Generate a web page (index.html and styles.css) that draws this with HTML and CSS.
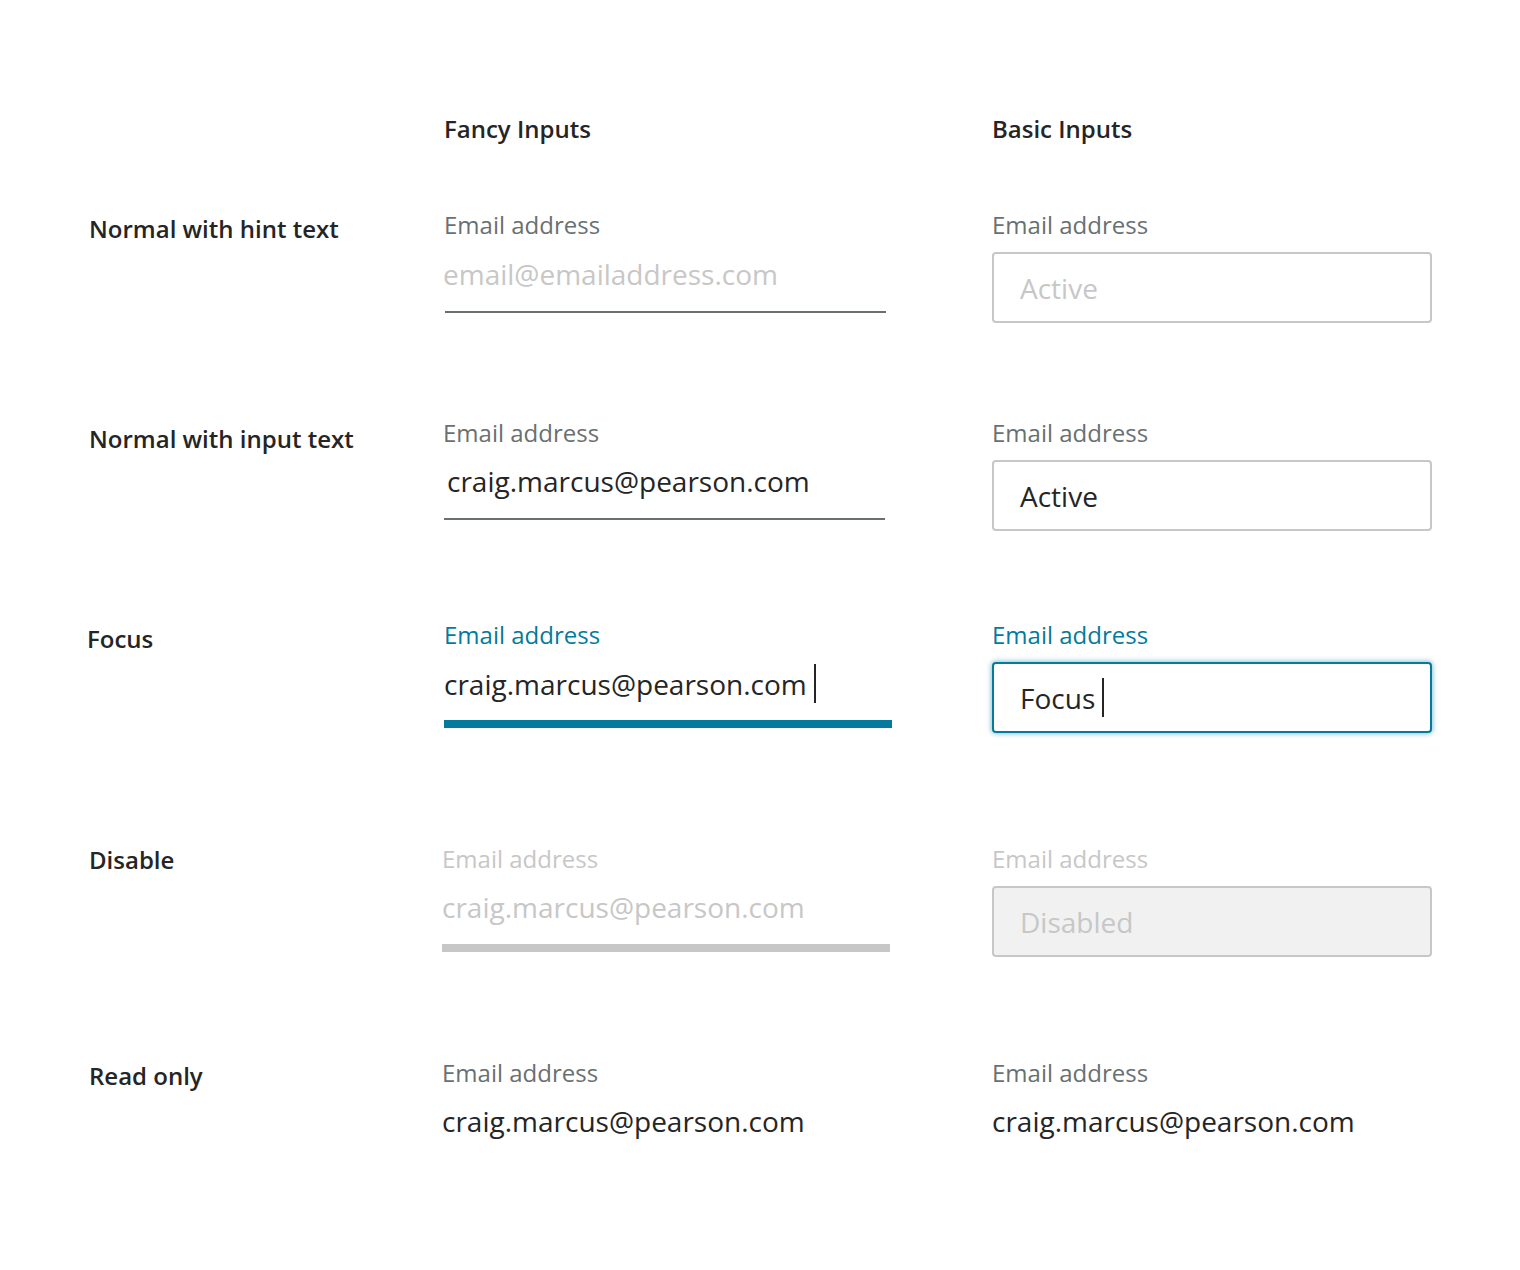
FILE: index.html
```html
<!DOCTYPE html>
<html lang="en">
<head>
<meta charset="utf-8">
<title>Inputs</title>
<link rel="stylesheet" href="styles.css">
</head>
<body>
<main class="sheet">
  <div class="row row-head">
    <div class="row-label"></div>
    <div class="col-title">Fancy Inputs</div>
    <div class="col-title">Basic Inputs</div>
  </div>

  <div class="row row-1">
    <div class="row-label">Normal with hint text</div>
    <div class="fancy">
      <div class="field-label">Email address</div>
      <div class="fancy-value hint wide-gap">email@emailaddress.com</div>
    </div>
    <div class="basic">
      <div class="field-label">Email address</div>
      <div class="box"><span class="hint">Active</span></div>
    </div>
  </div>

  <div class="row row-2">
    <div class="row-label">Normal with input text</div>
    <div class="fancy shift-1">
      <div class="field-label">Email address</div>
      <div class="fancy-value indent">craig.marcus@pearson.com</div>
    </div>
    <div class="basic">
      <div class="field-label">Email address</div>
      <div class="box">Active</div>
    </div>
  </div>

  <div class="row row-3">
    <div class="row-label shift-2">Focus</div>
    <div class="fancy">
      <div class="field-label focus">Email address</div>
      <div class="fancy-value focused">craig.marcus@pearson.com<span class="caret"></span></div>
    </div>
    <div class="basic">
      <div class="field-label focus">Email address</div>
      <div class="box box-focus">Focus<span class="caret"></span></div>
    </div>
  </div>

  <div class="row row-4">
    <div class="row-label">Disable</div>
    <div class="fancy shift-2">
      <div class="field-label disabled">Email address</div>
      <div class="fancy-value disabled-value">craig.marcus@pearson.com</div>
    </div>
    <div class="basic">
      <div class="field-label disabled">Email address</div>
      <div class="box box-disabled">Disabled</div>
    </div>
  </div>

  <div class="row row-5">
    <div class="row-label">Read only</div>
    <div class="fancy shift-2">
      <div class="field-label">Email address</div>
      <div class="read-value">craig.marcus@pearson.com</div>
    </div>
    <div class="basic">
      <div class="field-label">Email address</div>
      <div class="read-value">craig.marcus@pearson.com</div>
    </div>
  </div>
</main>
</body>
</html>
```

FILE: styles.css
```css
html, body {
  margin: 0;
  padding: 0;
  background: #ffffff;
}

body {
  font-family: "Open Sans", "Noto Sans", sans-serif;
  color: #252525;
}

.sheet {
  padding: 114px 0 0 89px;
}

.row {
  display: grid;
  grid-template-columns: 355px 548px 440px;
  align-items: start;
}

.row-1 { margin-top: 66px; }
.row-2 { margin-top: 95px; }
.row-3 { margin-top: 89px; }
.row-4 { margin-top: 111px; }
.row-5 { margin-top: 101px; }

.col-title {
  font-size: 24px;
  line-height: 30px;
  font-weight: 600;
  color: #252525;
}

.row-label {
  font-size: 24px;
  line-height: 30px;
  font-weight: 600;
  color: #252525;
  padding-top: 4px;
}

.row-2 .row-label { padding-top: 6px; }
.row-4 .row-label { padding-top: 1px; }
.row-5 .row-label { padding-top: 3px; }

.shift-1 { margin-left: -1px; }
.shift-2 { margin-left: -2px; }

.field-label {
  font-size: 24px;
  line-height: 30px;
  color: #6a7070;
}

.field-label.focus { color: #047a9c; }
.field-label.disabled { color: #c7c7c7; }

.fancy {
  width: 448px;
}

.fancy-value {
  width: 441px;
  margin-left: 1px;
  margin-top: 14px;
  padding-bottom: 18px;
  font-size: 28px;
  line-height: 38px;
  height: 38px;
  white-space: nowrap;
  border-bottom: 2px solid #6a7070;
  color: #252525;
}

.fancy-value.wide-gap {
  margin-top: 15px;
  margin-left: 1px;
  text-indent: -2px;
}

.fancy-value.indent {
  text-indent: 3px;
}

.hint { color: #c7c7c7; }

.fancy-value.focused {
  width: 448px;
  margin-left: 0;
  border-bottom: 8px solid #047a9c;
}

.fancy-value.disabled-value {
  width: 448px;
  margin-left: 0;
  color: #c7c7c7;
  border-bottom: 8px solid #c7c7c7;
}

.read-value {
  margin-top: 14px;
  font-size: 28px;
  line-height: 38px;
  white-space: nowrap;
  color: #252525;
}

.caret {
  display: inline-block;
  width: 2px;
  height: 39px;
  margin-left: 7px;
  background: #252525;
  vertical-align: -8px;
}

.basic {
  width: 440px;
}

.box {
  box-sizing: border-box;
  width: 440px;
  height: 71px;
  margin-top: 12px;
  padding: 0 0 0 26px;
  border: 2px solid #c7c7c7;
  border-radius: 4px;
  display: flex;
  align-items: center;
  font-size: 28px;
  color: #252525;
  white-space: nowrap;
  background: #ffffff;
}

.box-focus {
  border-color: #047a9c;
  box-shadow: 0 0 5px 1px rgba(4, 122, 156, 0.45);
}

.box-disabled {
  background: #f1f1f1;
  color: #c7c7c7;
}
```
